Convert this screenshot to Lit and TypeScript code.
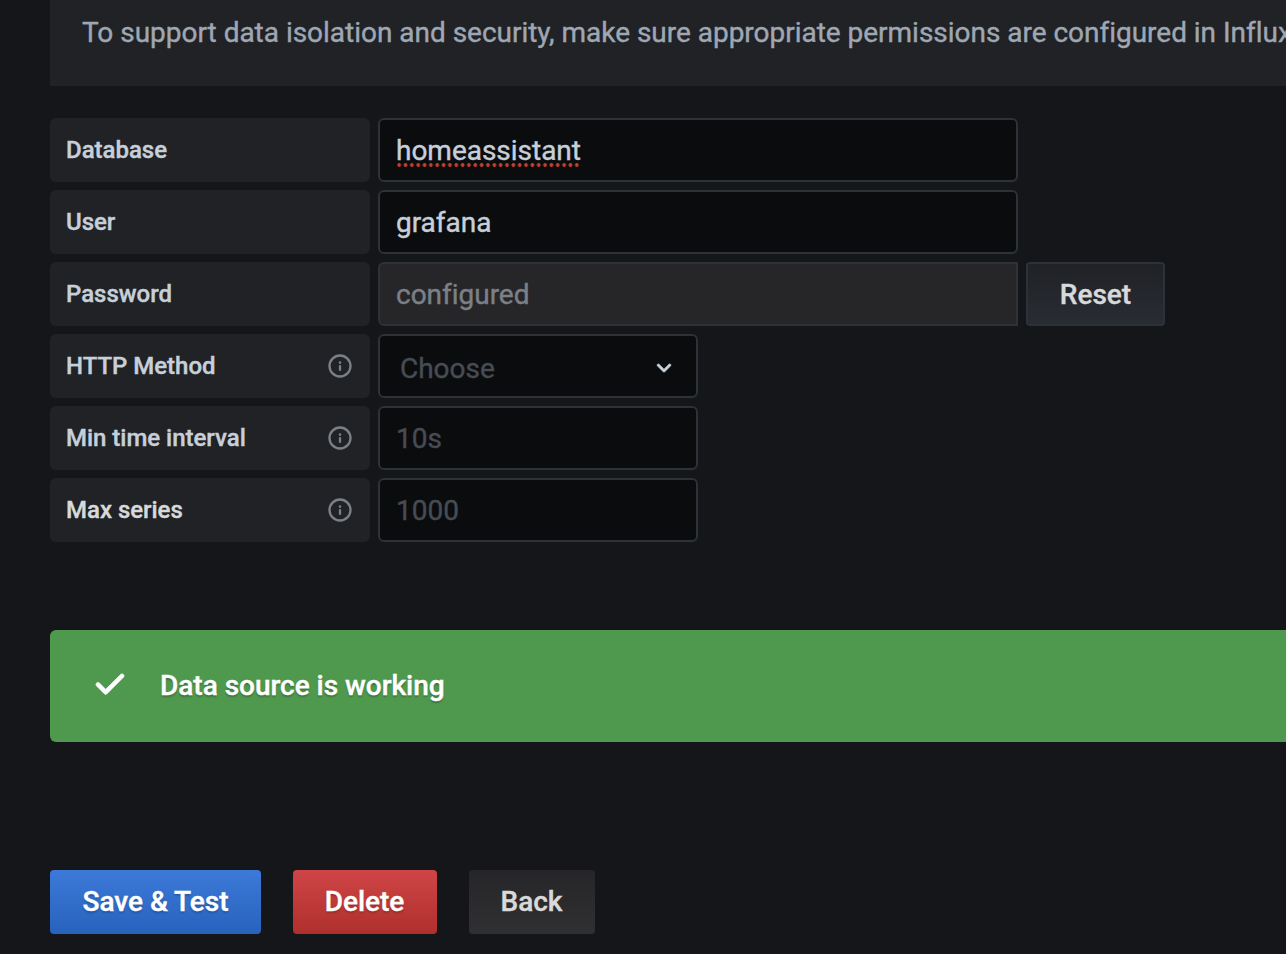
import { LitElement, html, css, svg, nothing } from "lit";
import { customElement } from "lit/decorators.js";

const ICONS = {
  info: "M12,2A10,10,0,1,0,22,12,10,10,0,0,0,12,2Zm0,18a8,8,0,1,1,8-8A8,8,0,0,1,12,20Zm0-8.8a1,1,0,0,0-1,1v3a1,1,0,0,0,2,0v-3A1,1,0,0,0,12,11.2Zm0-3.3a1.15,1.15,0,1,0,1.15,1.15A1.15,1.15,0,0,0,12,7.9Z",
  angleDown:
    "M17,9.17a1,1,0,0,0-1.41,0L12,12.71,8.46,9.17a1,1,0,0,0-1.41,0,1,1,0,0,0,0,1.42l4.24,4.24a1,1,0,0,0,1.42,0L17,10.59A1,1,0,0,0,17,9.17Z",
  check:
    "M18.71,7.21a1,1,0,0,0-1.42,0L9.84,14.67,6.71,11.53A1,1,0,1,0,5.29,13l3.84,3.84a1,1,0,0,0,1.42,0l8.16-8.16A1,1,0,0,0,18.71,7.21Z",
};

const icon = (name: keyof typeof ICONS, cls: string) => html`
  <svg class="icon ${cls}" viewBox="0 0 24 24" aria-hidden="true">${svg`<path d=${ICONS[name]}></path>`}</svg>
`;

@customElement("app-root")
export class AppRoot extends LitElement {
  static styles = css`
    :host {
      display: block;
      box-sizing: border-box;
      height: 954px;
      padding-left: 50px;
      overflow: hidden;
      background: #15161a;
      color: #c7d0d9;
      font: 400 28px/42px Roboto, "Liberation Sans", sans-serif;
      letter-spacing: -0.02px;
      -webkit-text-stroke: 0.4px currentColor;
    }
    * { box-sizing: border-box; }
    .icon { display: block; flex: none; fill: currentColor; }
    .angle, .check { stroke: currentColor; stroke-width: 0.3; }
    .note {
      height: 86px;
      padding: 12px 0 0 32px;
      background: #202226;
      color: #9fa7b3;
      white-space: nowrap;
    }
    .form {
      display: flex;
      flex-direction: column;
      gap: 8px;
      margin-top: 32px;
    }
    .row { display: flex; gap: 8px; height: 64px; }
    .label {
      display: flex;
      align-items: center;
      justify-content: space-between;
      width: 320px;
      padding: 0 16px;
      border-radius: 6px;
      background: #202226;
      font-size: 24px;
      font-weight: 500;
    }
    .label span { padding-bottom: 1px; }
    .label.bright { color: #d8d9da; }
    .info { width: 28px; height: 28px; color: #7b8087; }
    .field {
      display: flex;
      align-items: center;
      width: 320px;
      padding: 2px 16px 0;
      border: 2px solid #2c3235;
      border-radius: 6px;
      background: #0b0c0e;
    }
    .wide { width: 640px; }
    .placeholder { color: #464c54; }
    .disabled { border-radius: 6px 0 0 6px; background: #262628; color: #7b8087; }
    .select { justify-content: space-between; padding: 6px 16px 0 20px; }
    .angle { width: 32px; height: 32px; margin-top: -2px; color: #c7d0d9; }
    .misspelled {
      background: radial-gradient(circle, #c43e2c 1.6px, transparent 2.1px) 0 calc(100% - 1px) / 6.345px 4px repeat-x;
      line-height: 34px;
    }
    .btn {
      display: flex;
      align-items: center;
      justify-content: center;
      height: 64px;
      border-radius: 4px;
      font-weight: 500;
      padding-bottom: 1px;
    }
    .reset {
      width: 139px;
      border: 2px solid #2c3235;
      background: linear-gradient(#202226, #292c33);
      color: #d8d9da;
      padding: 2px 0 0;
    }
    .alert {
      display: flex;
      align-items: center;
      height: 112px;
      margin-top: 88px;
      padding-left: 36px;
      border-radius: 6px 0 0 6px;
      background: #4f994e;
      color: #fff;
      font-weight: 500;
      text-shadow: 0 2px 2px rgba(0, 0, 0, 0.25);
    }
    .check { width: 48px; height: 48px; margin: -4px 26px 0 0; }
    .actions { display: flex; gap: 32px; margin-top: 128px; }
    .save, .delete { color: #fff; text-shadow: 0 2px 2px rgba(0, 0, 0, 0.2); }
    .save { width: 211px; background: linear-gradient(#3d79d8, #2762bd); }
    .delete { width: 144px; padding-right: 1px; background: linear-gradient(#d04547, #ae302c); }
    .back { width: 126px; padding-right: 1px; background: linear-gradient(#262628, #303032); color: #d8d9da; }
  `;

  private label(text: string, info = false, bright = false) {
    return html`<div class="label ${bright ? "bright" : ""}">
      <span>${text}</span>${info ? icon("info", "info") : nothing}
    </div>`;
  }

  render() {
    return html`
      <div class="note">
        To support data isolation and security, make sure appropriate permissions are configured in InfluxDB.
      </div>
      <div class="form">
        <div class="row">
          ${this.label("Database")}
          <div class="field wide"><span class="misspelled">homeassistant</span></div>
        </div>
        <div class="row">
          ${this.label("User")}
          <div class="field wide"><span>grafana</span></div>
        </div>
        <div class="row">
          ${this.label("Password")}
          <div class="field wide disabled"><span>configured</span></div>
          <div class="btn reset" role="button">Reset</div>
        </div>
        <div class="row">
          ${this.label("HTTP Method", true)}
          <div class="field select placeholder"><span>Choose</span>${icon("angleDown", "angle")}</div>
        </div>
        <div class="row">
          ${this.label("Min time interval", true)}
          <div class="field placeholder"><span>10s</span></div>
        </div>
        <div class="row">
          ${this.label("Max series", true, true)}
          <div class="field placeholder"><span>1000</span></div>
        </div>
      </div>
      <div class="alert">${icon("check", "check")}<span>Data source is working</span></div>
      <div class="actions">
        <div class="btn save" role="button">Save &amp; Test</div>
        <div class="btn delete" role="button">Delete</div>
        <div class="btn back" role="button">Back</div>
      </div>
    `;
  }
}
